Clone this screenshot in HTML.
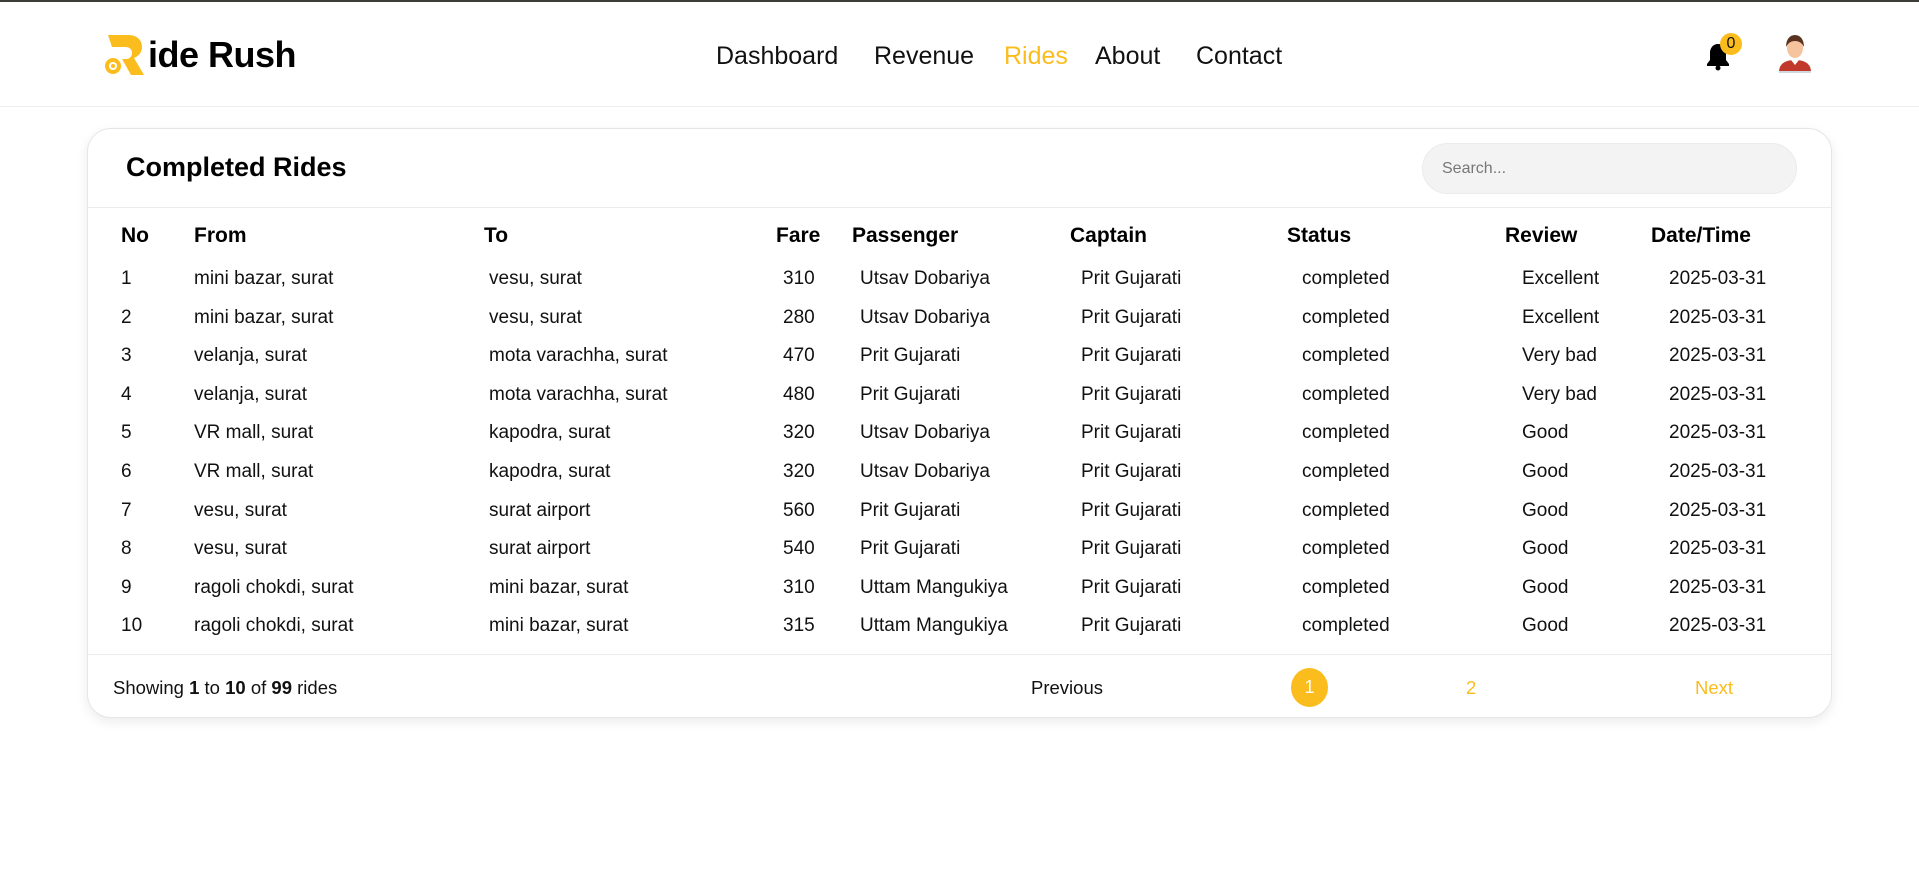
<!DOCTYPE html>
<html><head><meta charset="utf-8"><style>
*{margin:0;padding:0;box-sizing:border-box}
body{width:1919px;height:869px;background:#fff;font-family:"Liberation Sans",sans-serif;color:#111;position:relative;overflow:hidden}
.topline{position:absolute;top:0;left:0;right:0;height:2px;background:#3a3d38}
.hdr{position:absolute;top:2px;left:0;right:0;height:105px;border-bottom:1px solid #eee}
.logo{position:absolute;left:102px;top:31px;display:flex;align-items:center}
.logo span{font-weight:bold;font-size:36px;letter-spacing:-0.5px;color:#000;margin-left:2px}
.nav a{position:absolute;top:40px;font-size:25px;color:#111;text-decoration:none}
.bell{position:absolute;left:1705px;top:40px}
.badge{position:absolute;left:1720px;top:31px;width:22px;height:22px;border-radius:50%;background:#fbbd1d;font-size:16px;text-align:center;line-height:22px;color:#111}
.card{position:absolute;left:87px;top:128px;width:1745px;height:590px;border:1px solid #e6e6e6;border-radius:24px;box-shadow:0 4px 12px rgba(0,0,0,.08);background:#fff}
.title{position:absolute;left:38px;top:23px;font-size:27px;font-weight:bold;color:#000}
.search{position:absolute;left:1334px;top:14px;width:375px;height:51px;border-radius:26px;background:#f3f3f3;border:1px solid #ebebeb;font-size:16px;color:#777;padding:16px 19px}
.div1{position:absolute;left:0;right:0;top:78px;border-top:1px solid #ececec}
.div2{position:absolute;left:0;right:0;top:525px;border-top:1px solid #ececec}
.c{position:absolute;white-space:nowrap;font-size:19px;color:#111}
.h{font-weight:bold;font-size:21px;color:#000}
</style></head><body>
<div class="topline"></div>
<div class="hdr">
 <div class="logo">
  <svg width="44" height="44" viewBox="0 0 44 44"><path d="M6 2h20c9 0 14 5 14 12 0 5-3 9-8 11l10 17h-13l-9-16h4c3 0 6-2 6-6s-3-6-7-6H10z" fill="#fbbd1d"/><circle cx="11" cy="33" r="8" fill="#fbbd1d"/><circle cx="11" cy="33" r="4" fill="#fff"/><circle cx="11" cy="33" r="2" fill="#fbbd1d"/></svg>
  <span>ide Rush</span>
 </div>
 <div class="nav">
  <a style="left:716px">Dashboard</a><a style="left:874px">Revenue</a><a style="left:1004px;color:#fbbd1d">Rides</a><a style="left:1095px">About</a><a style="left:1196px">Contact</a>
 </div>
 <svg class="bell" width="26" height="30" viewBox="0 0 26 30"><path d="M13 2c-5 0-8 4-8 9v7l-3 4v2h22v-2l-3-4v-7c0-5-3-9-8-9z" fill="#000"/><circle cx="13" cy="26" r="2.5" fill="#000"/></svg>
 <div class="badge">0</div>
 <svg style="position:absolute;left:1776px;top:30px" width="38" height="42" viewBox="0 0 38 42"><path d="M3 40c0-8 6-12 16-12s16 4 16 12z" fill="#c0392b"/><path d="M15 28l4 5 4-5z" fill="#fff"/><ellipse cx="19" cy="16" rx="8" ry="10" fill="#f5c39e"/><path d="M10 15c0-8 4-12 9-12s9 4 9 12c-2-4-5-6-9-6s-7 2-9 6z" fill="#5a3320"/><rect x="3" y="39" width="32" height="2" fill="#cfd8dc"/></svg>
</div>
<div class="card">
 <div class="title">Completed Rides</div>
 <div class="search">Search...</div>
 <div class="div1"></div>
 <div class="div2"></div>
 <div id="t"></div>
 <div class="c" style="left:25px;top:548px;font-size:18.5px">Showing <b>1</b> to <b>10</b> of <b>99</b> rides</div>
 <div class="c" style="left:943px;top:548px;font-size:18.5px">Previous</div>
 <div style="position:absolute;left:1203px;top:539px;width:37px;height:39px;border-radius:50%;background:#fbbd1d;color:#fff;text-align:center;line-height:39px;font-size:18px">1</div>
 <div class="c" style="left:1378px;top:548px;font-size:18.5px;color:#fbbd1d">2</div>
 <div class="c" style="left:1607px;top:548px;font-size:18.5px;color:#fbbd1d">Next</div>
</div>
<script>
var hx=[33,106,396,688,764,982,1199,1417,1563],hn=["No","From","To","Fare","Passenger","Captain","Status","Review","Date/Time"];
var dx=[33,106,401,695,772,993,1214,1434,1581];
var R=[["mini bazar, surat","vesu, surat","310","Utsav Dobariya","Excellent"],["mini bazar, surat","vesu, surat","280","Utsav Dobariya","Excellent"],["velanja, surat","mota varachha, surat","470","Prit Gujarati","Very bad"],["velanja, surat","mota varachha, surat","480","Prit Gujarati","Very bad"],["VR mall, surat","kapodra, surat","320","Utsav Dobariya","Good"],["VR mall, surat","kapodra, surat","320","Utsav Dobariya","Good"],["vesu, surat","surat airport","560","Prit Gujarati","Good"],["vesu, surat","surat airport","540","Prit Gujarati","Good"],["ragoli chokdi, surat","mini bazar, surat","310","Uttam Mangukiya","Good"],["ragoli chokdi, surat","mini bazar, surat","315","Uttam Mangukiya","Good"]];
var h="";
for(var i=0;i<9;i++)h+='<div class="c h" style="left:'+hx[i]+'px;top:95px">'+hn[i]+'</div>';
R.forEach(function(r,j){var v=[j+1,r[0],r[1],r[2],r[3],"Prit Gujarati","completed",r[4],"2025-03-31"];var y=139+j*38.6;
for(var i=0;i<9;i++)h+='<div class="c" style="left:'+dx[i]+'px;top:'+y+'px">'+v[i]+'</div>';});
document.getElementById("t").innerHTML=h;
</script>
</body></html>
